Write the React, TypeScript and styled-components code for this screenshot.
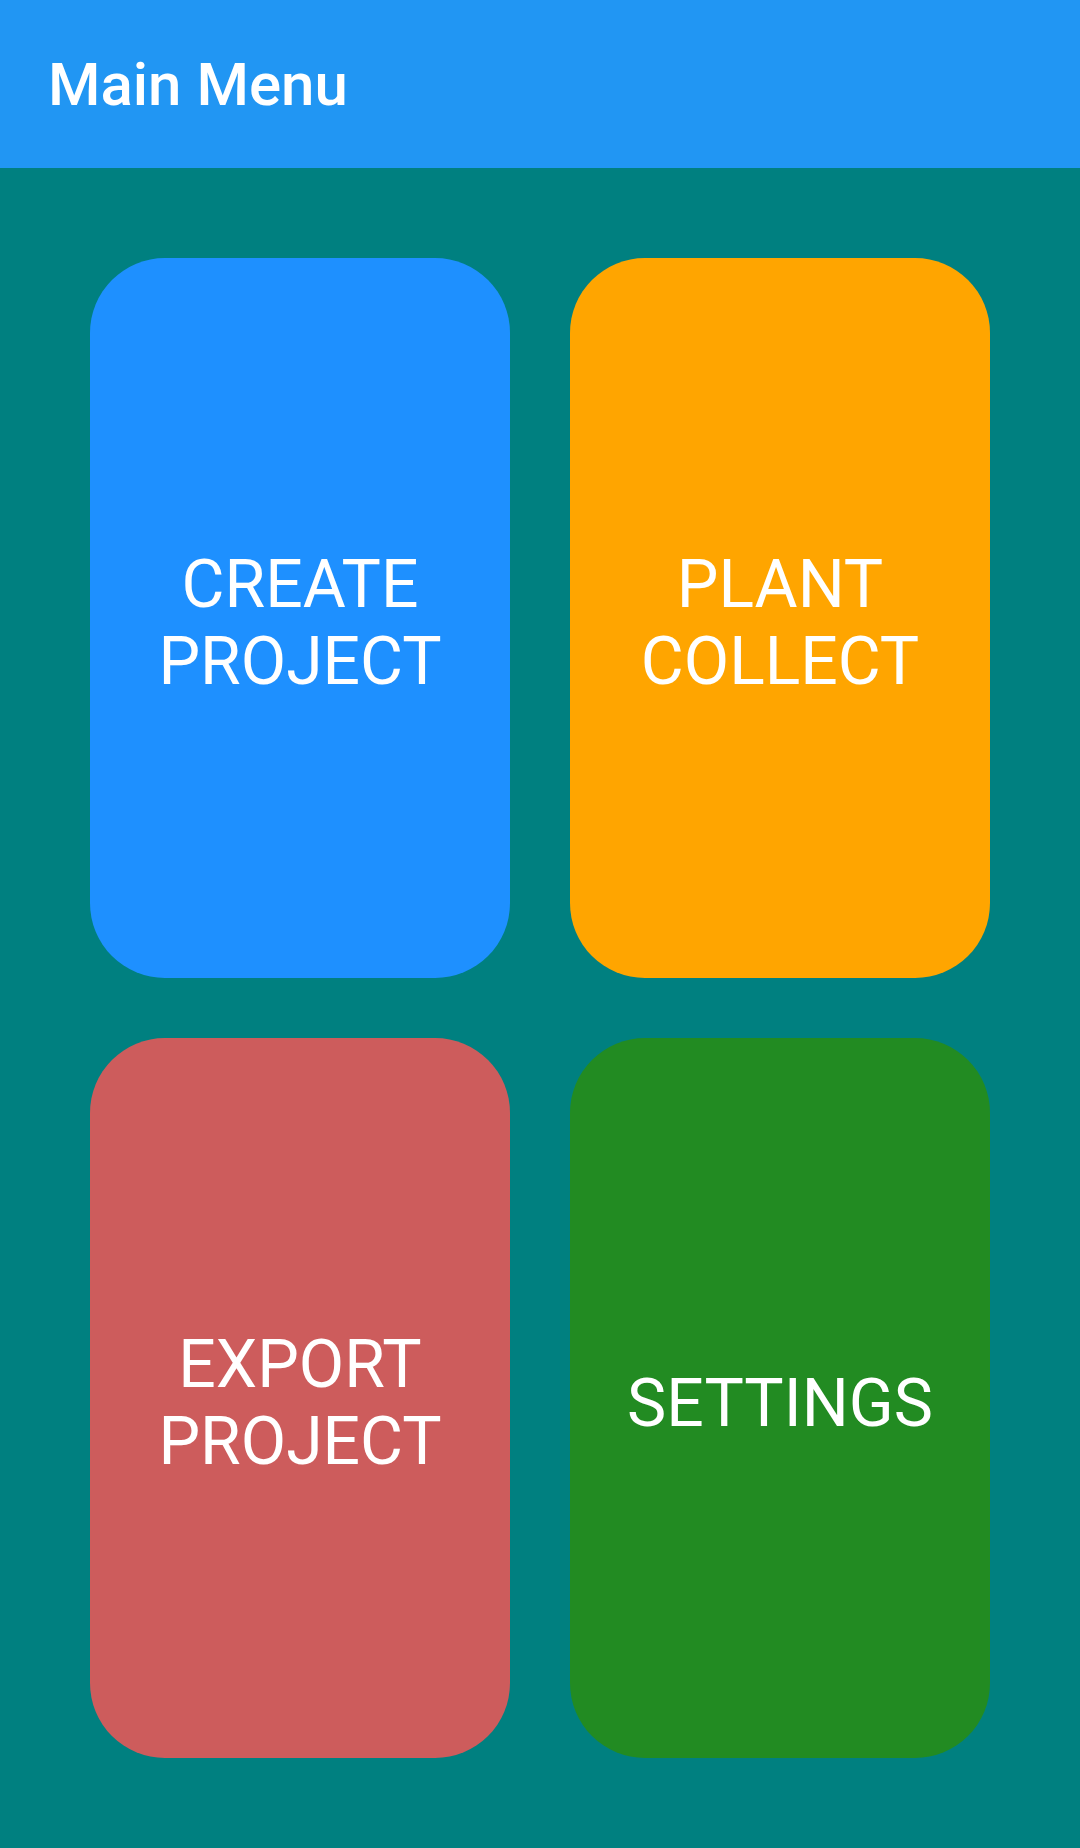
import React from "react";
import styled, { createGlobalStyle } from "styled-components";

const GlobalStyle = createGlobalStyle`
  html, body { margin: 0; padding: 0; }
  body { font-family: Roboto, "Noto Sans", sans-serif; background: #008080; }
  * { box-sizing: border-box; }
`;

const Screen = styled.div`
  width: 1080px;
  height: 1848px;
  display: flex;
  flex-direction: column;
  background: #008080;
`;

const AppBar = styled.header`
  height: 168px;
  flex: none;
  background: #2196f3;
  display: flex;
  align-items: center;
  padding-left: 48px;
  padding-top: 2px;
`;

const Title = styled.h1`
  margin: 0;
  font-family: Roboto, sans-serif;
  font-weight: 500;
  font-size: 60px;
  color: #ffffff;
  line-height: 1;
`;

const Grid = styled.main`
  flex: 1;
  display: grid;
  grid-template-columns: 1fr 1fr;
  grid-template-rows: 1fr 1fr;
  gap: 60px;
  padding: 90px;
`;

const Tile = styled.button<{ $bg: string }>`
  border: none;
  border-radius: 75px;
  background: ${(p) => p.$bg};
  color: #ffffff;
  font-family: Roboto, sans-serif;
  font-weight: 400;
  font-size: 66px;
  line-height: 77px;
  text-align: center;
  display: flex;
  align-items: center;
  justify-content: center;
  padding: 10px 40px 0;
  cursor: pointer;
`;

const tiles = [
  { label: ["CREATE", "PROJECT"], bg: "#1e90ff" },
  { label: ["PLANT", "COLLECT"], bg: "#ffa500" },
  { label: ["EXPORT", "PROJECT"], bg: "#cd5c5c" },
  { label: ["SETTINGS"], bg: "#228b22" },
];

export default function App() {
  return (
    <>
      <GlobalStyle />
      <Screen>
        <AppBar>
          <Title>Main Menu</Title>
        </AppBar>
        <Grid>
          {tiles.map((t) => (
            <Tile key={t.label.join(" ")} $bg={t.bg}>
              <span>
                {t.label.map((l, i) => (
                  <React.Fragment key={l}>
                    {i > 0 && <br />}
                    {l}
                  </React.Fragment>
                ))}
              </span>
            </Tile>
          ))}
        </Grid>
      </Screen>
    </>
  );
}
